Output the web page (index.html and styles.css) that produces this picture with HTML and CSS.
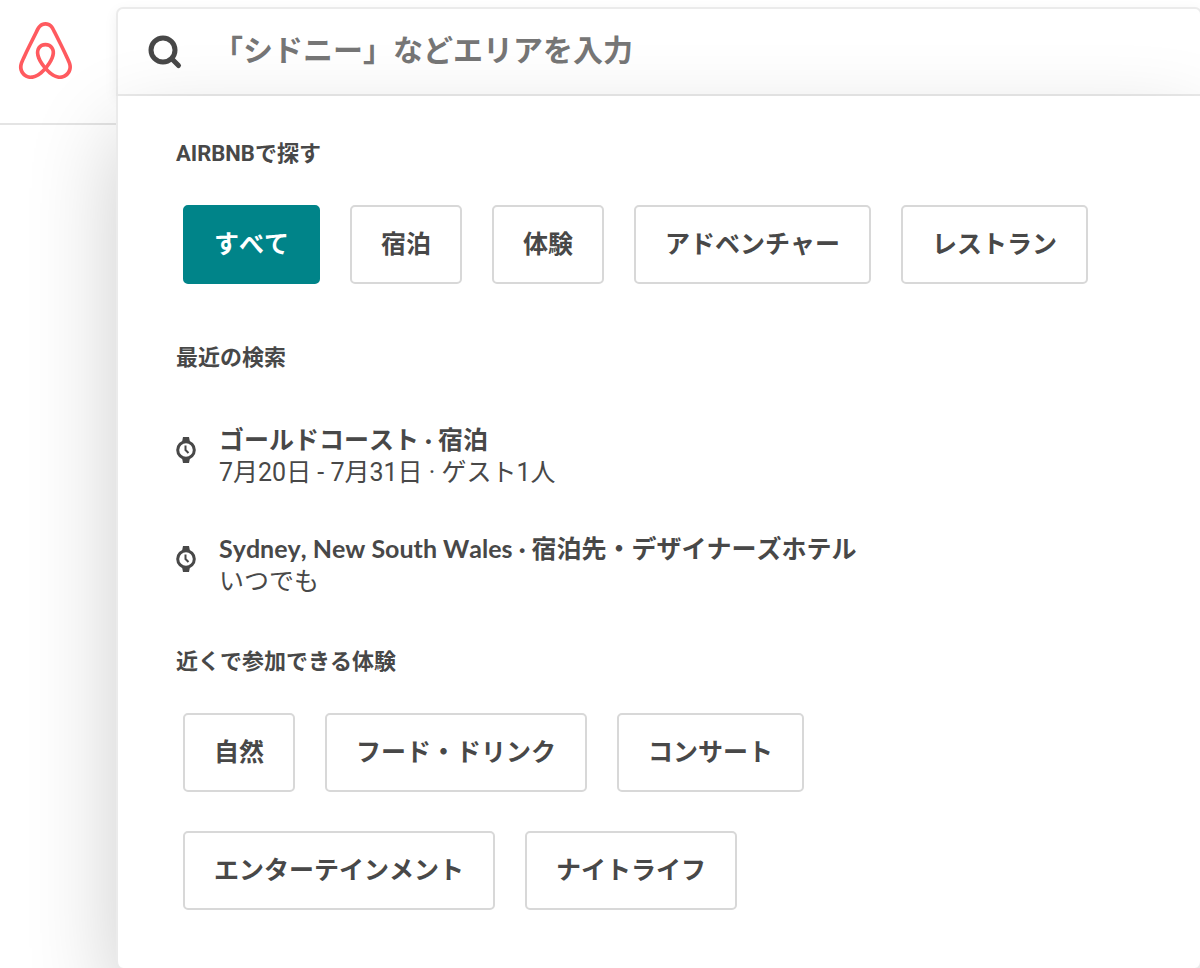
FILE: index.html
```html
<!DOCTYPE html>
<html lang="ja">
<head>
<meta charset="utf-8">
<meta name="viewport" content="width=device-width, initial-scale=1">
<title>Airbnb</title>
<link rel="stylesheet" href="styles.css">
</head>
<body>
<div class="page">
  <header class="brand">
    <a class="brand-link" href="#" aria-label="Airbnb">
      <svg class="brand-logo" viewBox="0 0 1000 1000" aria-hidden="true"><path d="m499.3 736.7c-51-64-81-120-91-168-10-39-6-70 11-93 18-27 45-40 80-40s62 13 80 40c17 23 21 54 11 93-11 49-41 105-91 168zm362.2 43c-7 47-39 86-83 105-85 37-169-22-241-102 119-149 141-265 90-340-30-43-73-64-128-64-111 0-172 94-148 203 14 59 51 126 110 201-37 41-72 70-103 88-24 13-47 21-69 23-101 15-180-83-144-184 5-13 15-37 32-74l1-2c55-120 122-256 199-407l2-5 22-42c17-31 24-45 51-62 13-8 29-12 47-12 36 0 64 21 76 38 6 9 13 21 22 36l21 41 3 6c77 151 144 287 199 407l1 1 20 46 12 29c9.2 23.1 11.2 46.1 8.2 70.1zm46-90.1c-7-22-19-48-34-79v-1c-71-151-137-287-200-409l-4-6c-45-92-77-147-170-147-92 0-131 64-171 147l-3 6c-63 122-129 258-200 409v2l-21 46c-8 19-12 29-13 32-51 140 54 263 181 263 1 0 5 0 10-1h14c66-8 134-50 203-125 69 75 137 117 203 125h14c5 1 9 1 10 1 127 .1 232-123 181-263z"/></svg>
    </a>
  </header>
  <main class="search">
    <label class="search-bar">
      <svg class="search-icon" viewBox="0 0 36 36" aria-hidden="true"><circle cx="16" cy="16" r="12"/><path d="M25 25l6.500 6.500"/></svg>
      <input class="search-input" type="text" placeholder="「シドニー」などエリアを入力" aria-label="エリアを入力">
    </label>
    <div class="panel">
      <section class="group">
        <h2 class="heading">AIRBNBで探す</h2>
        <div class="chips">
          <button class="chip chip-active" type="button">すべて</button>
          <button class="chip" type="button">宿泊</button>
          <button class="chip" type="button">体験</button>
          <button class="chip" type="button">アドベンチャー</button>
          <button class="chip" type="button">レストラン</button>
        </div>
      </section>
      <section class="group group-recent">
        <h2 class="heading">最近の検索</h2>
        <ul class="recents">
          <li>
            <a class="recent" href="#">
              <svg class="clock" viewBox="0 0 20 28" aria-hidden="true"><path class="lug" d="M7 1h6l1 5h-8zM7 27h6l1-5h-8z"/><circle cx="10" cy="14" r="8.300"/><path class="hands" d="M9.500 9.500v4.500l3 3"/></svg>
              <span class="recent-text"><span class="recent-title">ゴールドコースト · 宿泊</span><span class="recent-detail">7月20日 - 7月31日 · ゲスト1人</span></span>
            </a>
          </li>
          <li>
            <a class="recent" href="#">
              <svg class="clock" viewBox="0 0 20 28" aria-hidden="true"><path class="lug" d="M7 1h6l1 5h-8zM7 27h6l1-5h-8z"/><circle cx="10" cy="14" r="8.300"/><path class="hands" d="M9.500 9.500v4.500l3 3"/></svg>
              <span class="recent-text"><span class="recent-title">Sydney, New South Wales · 宿泊先・デザイナーズホテル</span><span class="recent-detail">いつでも</span></span>
            </a>
          </li>
        </ul>
      </section>
      <section class="group">
        <h2 class="heading">近くで参加できる体験</h2>
        <div class="chips chips-nearby">
          <button class="chip" type="button">自然</button>
          <button class="chip" type="button">フード・ドリンク</button>
          <button class="chip" type="button">コンサート</button>
          <button class="chip" type="button">エンターテインメント</button>
          <button class="chip" type="button">ナイトライフ</button>
        </div>
      </section>
    </div>
  </main>
</div>
</body>
</html>
```
FILE: styles.css
```css
* {
  box-sizing: border-box;
}

body {
  margin: 0;
  background: #fff;
  color: #484848;
  font-family: Roboto, "Noto Sans CJK JP", sans-serif;
  font-kerning: none;
}

.page {
  display: flex;
  min-height: 100vh;
  overflow: hidden;
}

.brand {
  flex: 0 0 116px;
  align-self: flex-start;
  height: 125px;
  padding: 19px 14px;
  border-bottom: 2px solid #e4e4e4;
}

.brand-link {
  display: block;
  width: 63px;
}

.brand-logo {
  display: block;
  width: 63px;
  height: 63px;
  fill: #ff5a5f;
}

.search {
  flex: 1;
  min-width: 0;
  display: flex;
  flex-direction: column;
  margin-right: -2px;
  padding-top: 7px;
}

.search-bar {
  display: flex;
  align-items: center;
  gap: 30px;
  height: 89px;
  padding: 0 30px 0 29px;
  border: 2px solid #ebebeb;
  border-radius: 7px 7px 0 0;
  background: #fff;
  box-shadow: 0 4px 14px rgba(0, 0, 0, 0.06);
}

.search-icon {
  flex: none;
  width: 36px;
  height: 36px;
  fill: none;
  stroke: #484848;
  stroke-width: 5;
  stroke-linecap: round;
}

.search-input {
  flex: 1;
  min-width: 0;
  height: 48px;
  padding: 0 0 2px;
  border: 0;
  outline: 0;
  background: transparent;
  color: #484848;
  font: bold 30px Roboto, "Noto Sans CJK JP", sans-serif;
  font-kerning: none;
}

.search-input::placeholder {
  color: #767676;
  opacity: 1;
}

.panel {
  position: relative;
  flex: 1;
  display: flex;
  flex-direction: column;
  gap: 58px;
  padding: 42px 58px 58px;
  border: solid #ebebeb;
  border-width: 0 2px;
  border-radius: 0 0 7px 7px;
  background: #fff;
  box-shadow: 0 36px 90px rgba(0, 0, 0, 0.2);
}

.group {
  display: flex;
  flex-direction: column;
  gap: 35px;
}

.group-recent {
  gap: 49px;
  margin-bottom: -10px;
}

.heading {
  margin: 0;
  font-size: 22px;
  font-weight: bold;
  line-height: 32px;
}

.chips {
  display: flex;
  flex-wrap: wrap;
  gap: 39px 30px;
  padding-left: 7px;
}

.chips-nearby {
  max-width: 720px;
}

.chip {
  padding: 22px 29px 21px;
  border: 2px solid #d8d8d8;
  border-radius: 5px;
  background: #fff;
  color: #484848;
  font: bold 25px/32px Roboto, "Noto Sans CJK JP", sans-serif;
  font-kerning: none;
  white-space: nowrap;
}

.chip-active {
  border-color: #008489;
  background: #008489;
  color: #fff;
}

.recents {
  display: flex;
  flex-direction: column;
  gap: 43px;
  margin: 0;
  padding: 0;
  list-style: none;
}

.recent {
  display: flex;
  align-items: flex-start;
  gap: 23px;
  color: inherit;
  text-decoration: none;
}

.clock {
  flex: none;
  width: 20px;
  height: 28px;
  margin-top: 13px;
  fill: none;
  stroke: #484848;
  stroke-width: 3;
}

.clock .lug {
  fill: #484848;
  stroke: none;
}

.clock .hands {
  stroke-width: 2;
}

.recent-text {
  display: flex;
  flex-direction: column;
  font-size: 25px;
  line-height: 33px;
}

.recent-title {
  font-family: Lato, "Noto Sans CJK JP", sans-serif;
  font-weight: bold;
}

.recent-detail {
  font-weight: 400;
}
```
